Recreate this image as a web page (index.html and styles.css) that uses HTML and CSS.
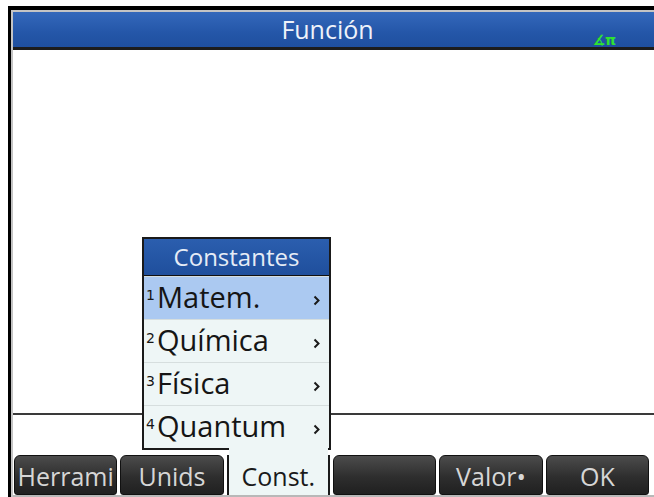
FILE: index.html
```html
<!DOCTYPE html>
<html lang="es">
<head>
<meta charset="UTF-8">
<meta name="viewport" content="width=device-width, initial-scale=1.0">
<title>Función</title>
<link rel="stylesheet" href="styles.css">
</head>
<body>
    <div class="device">
        <div class="screen">
            <div class="titlebar">
                <span class="title">Función</span>
                <span class="mode">∡π</span>
            </div>
            <div class="workarea">
                <div class="history"></div>
                <div class="entry"></div>
            </div>
            <div class="softkeys">
                <div class="key">Herrami</div>
                <div class="key">Unids</div>
                <div class="key active">Const.</div>
                <div class="key"></div>
                <div class="key">Valor•</div>
                <div class="key">OK</div>
            </div>

            <!-- popup menu opened from the Const. key -->
            <div class="menu">
                <div class="menu-head">Constantes</div>
                <div class="menu-item selected">
                    <span class="num">1</span><span class="label">Matem.</span>
                    <svg class="more" width="7" height="11" viewBox="0 0 7 11"><polyline points="1.5,1.5 5.5,5.5 1.5,9.5" fill="none" stroke="#1a1a1a" stroke-width="2"/></svg>
                </div>
                <div class="menu-item">
                    <span class="num">2</span><span class="label">Química</span>
                    <svg class="more" width="7" height="11" viewBox="0 0 7 11"><polyline points="1.5,1.5 5.5,5.5 1.5,9.5" fill="none" stroke="#1a1a1a" stroke-width="2"/></svg>
                </div>
                <div class="menu-item">
                    <span class="num">3</span><span class="label">Física</span>
                    <svg class="more" width="7" height="11" viewBox="0 0 7 11"><polyline points="1.5,1.5 5.5,5.5 1.5,9.5" fill="none" stroke="#1a1a1a" stroke-width="2"/></svg>
                </div>
                <div class="menu-item">
                    <span class="num">4</span><span class="label">Quantum</span>
                    <svg class="more" width="7" height="11" viewBox="0 0 7 11"><polyline points="1.5,1.5 5.5,5.5 1.5,9.5" fill="none" stroke="#1a1a1a" stroke-width="2"/></svg>
                </div>
            </div>
        </div>
    </div>
</body>
</html>
```

FILE: styles.css
```css
body {
    margin: 0;
    background: #fff;
    font-family: "Open Sans", "DejaVu Sans", sans-serif;
}

.device {
    margin: 6px 0 0 8px;
    height: 491px;
    border-top: 4px solid #000;
    border-left: 3px solid #000;
    box-sizing: border-box;
}

.screen {
    position: relative;
    height: 100%;
    display: flex;
    flex-direction: column;
    border-top: 2px solid #c4c4c4;
    border-left: 2px solid #c4c4c4;
    box-sizing: border-box;
}

.titlebar {
    height: 35px;
    display: flex;
    align-items: center;
    justify-content: center;
    position: relative;
    padding-right: 12px;
    background: linear-gradient(#3468bb, #2456a8 60%, #1f4f9f);
    border-bottom: 3px solid #1c1c1c;
}

.title {
    color: #eef2fa;
    font-size: 25px;
    line-height: 1;
}

.mode {
    position: absolute;
    right: 38px;
    bottom: -1px;
    color: #2fe32f;
    font-family: "DejaVu Sans", sans-serif;
    font-weight: bold;
    font-size: 14px;
}

.workarea {
    flex: 1;
    display: flex;
    flex-direction: column;
}

.history {
    flex: 1;
}

.entry {
    height: 40px;
    border-top: 2px solid #3a3a3a;
}

.softkeys {
    height: 40px;
    display: grid;
    grid-template-columns: repeat(6, 1fr);
    gap: 3px;
    padding: 0 5px 0 1px;
    border-bottom: 2px solid #b8b8b8;
}

.key {
    position: relative;
    display: flex;
    align-items: center;
    justify-content: center;
    background: linear-gradient(#4c4c4c, #2e2e2e 55%, #202020);
    border: 1px solid #111;
    border-radius: 6px 6px 3px 3px;
    color: #d6d6d6;
    font-size: 25px;
    line-height: 1;
    padding-top: 2px;
}

.key.active {
    background: #eef6f6;
    color: #1a1a1a;
    border: none;
    border-left: 2px solid #1a1a1a;
    border-right: 2px solid #1a1a1a;
    border-radius: 0;
    z-index: 2;
}

.key.active::before {
    content: "";
    position: absolute;
    left: 0;
    right: 0;
    top: -8px;
    height: 8px;
    background: #eef6f6;
}

.menu {
    position: absolute;
    left: 129px;
    top: 225px;
    width: 189px;
    border: 2px solid #1a1a1a;
    box-sizing: border-box;
    background: #eef6f6;
    z-index: 1;
}

.menu-head {
    height: 36px;
    display: flex;
    align-items: center;
    justify-content: center;
    background: linear-gradient(#2b5eae, #1f4f9c);
    border-bottom: 1px solid #111;
    color: #e6ecf6;
    font-size: 24px;
    line-height: 1;
}

.menu-item {
    height: 43px;
    display: flex;
    align-items: center;
    border-top: 1px solid #d6dede;
    box-sizing: border-box;
    color: #151515;
}

.menu-item:first-of-type {
    border-top: none;
}

.menu-item.selected {
    background: #abc9f1;
}

.num {
    width: 11px;
    padding-left: 2px;
    font-family: "DejaVu Sans", sans-serif;
    font-size: 14px;
    margin-top: -6px;
}

.label {
    flex: 1;
    font-size: 29px;
    font-weight: 500;
    line-height: 1;
    padding-bottom: 3px;
}

.more {
    margin: 4px 9px 0 0;
}
```
